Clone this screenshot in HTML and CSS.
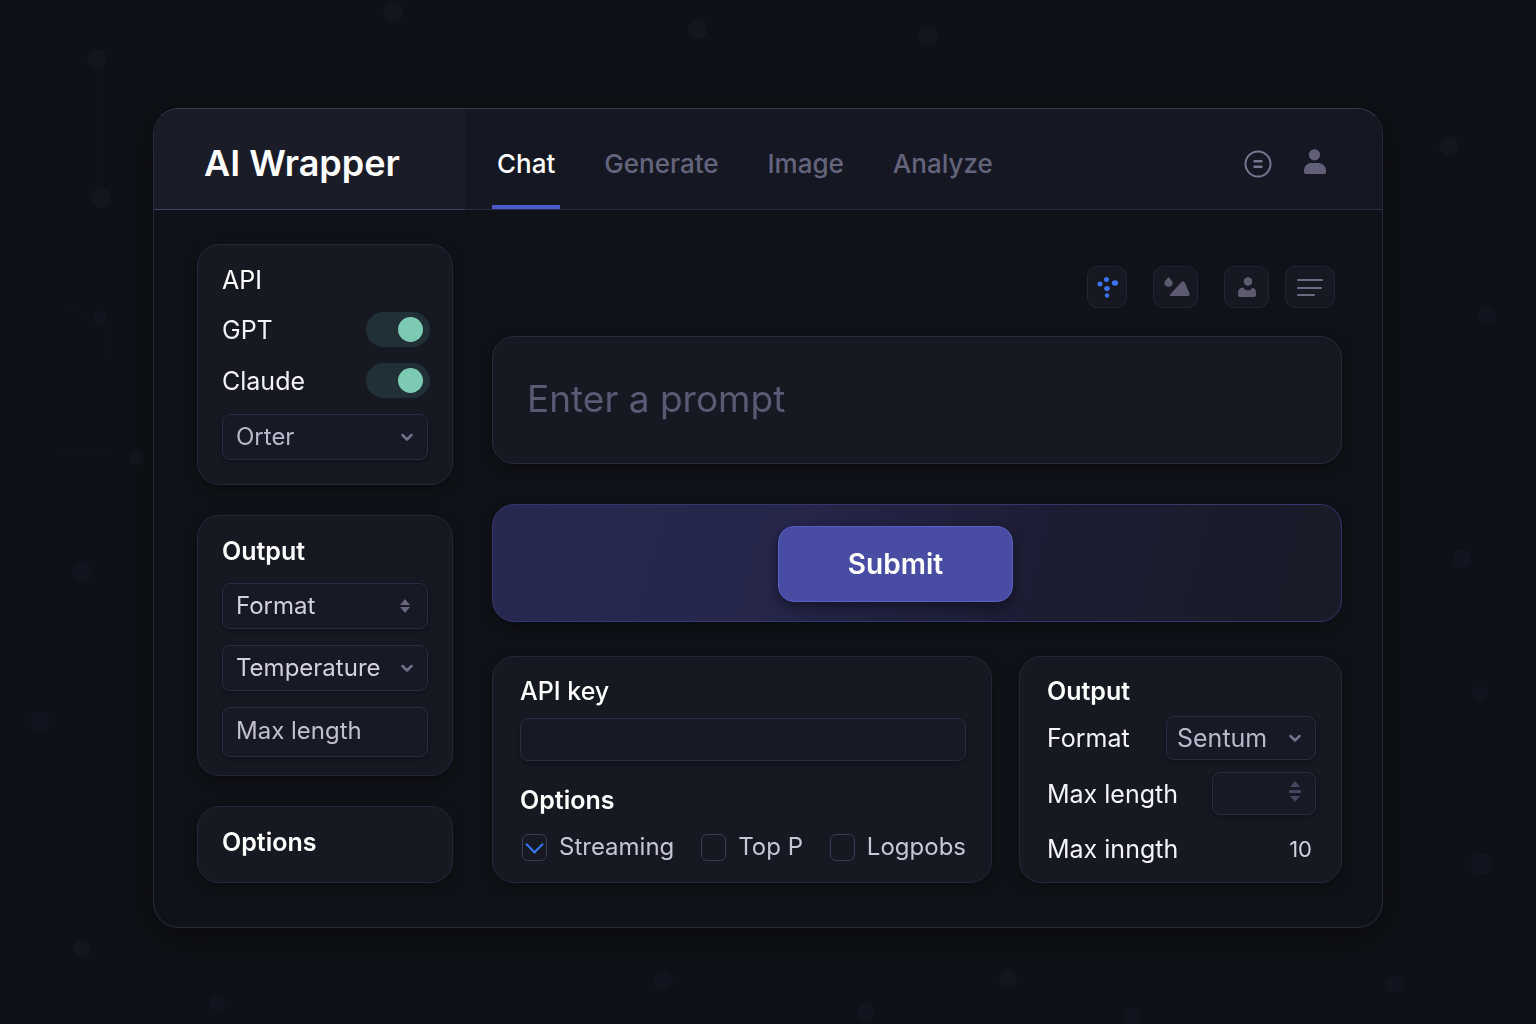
FILE: index.html
```
<!DOCTYPE html>
<html lang="en">
<head>
    <meta charset="UTF-8">
    <meta name="viewport" content="width=device-width, initial-scale=1.0">
    <title>AI Wrapper</title>
    <link rel="stylesheet" href="styles.css">
</head>
<body>
    <svg class="backdrop" viewBox="0 0 1536 1024" preserveAspectRatio="xMidYMid slice" aria-hidden="true">
        <g stroke="#11151f" fill="none">
            <path d="M98 70L101 188M95 205L45 262M104 328L134 448M50 453H128M60 306L90 314"/>
        </g>
        <g fill="#13161f">
            <circle cx="97" cy="59" r="10"/>
            <circle cx="393" cy="12" r="10"/>
            <circle cx="698" cy="29" r="10"/>
            <circle cx="928" cy="36" r="10"/>
            <circle cx="101" cy="198" r="10"/>
            <circle cx="137" cy="457" r="8"/>
            <circle cx="1449" cy="146" r="10"/>
            <circle cx="1008" cy="978" r="9"/>
            <circle cx="82" cy="949" r="9"/>
        </g>
        <g fill="#10151f">
            <circle cx="100" cy="318" r="7"/>
            <circle cx="82" cy="572" r="10"/>
            <circle cx="40" cy="721" r="10"/>
            <circle cx="217" cy="1003" r="8"/>
            <circle cx="663" cy="980" r="10"/>
            <circle cx="866" cy="1012" r="9"/>
            <circle cx="1132" cy="1016" r="8"/>
            <circle cx="1395" cy="984" r="9"/>
            <circle cx="1481" cy="864" r="11"/>
            <circle cx="1480" cy="694" r="8"/>
            <circle cx="1462" cy="559" r="10"/>
            <circle cx="1487" cy="315" r="9"/>
        </g>
    </svg>

    <div class="window">
        <header class="header">
            <h1 class="brand">AI Wrapper</h1>
            <nav class="tabs">
                <a href="#chat" class="tab active">Chat</a>
                <a href="#generate" class="tab">Generate</a>
                <a href="#image" class="tab">Image</a>
                <a href="#analyze" class="tab">Analyze</a>
            </nav>
            <div class="header-actions">
                <button type="button" class="icon-button" aria-label="Messages">
                    <svg width="28" height="28" viewBox="0 0 28 28" fill="none" stroke="#77758f" stroke-width="2">
                        <circle cx="14" cy="14" r="12.5"/>
                        <path d="M10.5 11.3H17.5M10.5 16.7H17.5" stroke-width="2.4" stroke-linecap="round"/>
                    </svg>
                </button>
                <button type="button" class="icon-button" aria-label="Account">
                    <svg width="24" height="32" viewBox="0 0 24 32" fill="#625f78">
                        <circle cx="11.5" cy="6.8" r="5.6"/>
                        <path d="M1 24V22.5C1 17.5 5 15 8.5 15H15C19 15 23 17.5 23 22.5V24Q23 26 21 26H3Q1 26 1 24Z"/>
                    </svg>
                </button>
            </div>
        </header>

        <div class="content">
            <aside class="sidebar">
                <section class="card">
                    <h2 class="heading light">API</h2>
                    <div class="row toggle-row">
                        <label for="gpt">GPT</label>
                        <input type="checkbox" class="toggle" id="gpt" checked>
                    </div>
                    <div class="row toggle-row">
                        <label for="claude">Claude</label>
                        <input type="checkbox" class="toggle" id="claude" checked>
                    </div>
                    <div class="field">
                        <select aria-label="Provider" class="muted"><option>Orter</option></select>
                        <svg class="field-icon" width="14" height="14" viewBox="0 0 14 14"><path class="chevron" d="M2.5 5L7 9.5L11.5 5"/></svg>
                    </div>
                </section>

                <section class="card">
                    <h2 class="heading">Output</h2>
                    <div class="field">
                        <select aria-label="Format"><option>Format</option></select>
                        <svg class="field-icon" width="14" height="14" viewBox="0 0 14 14" fill="#68667e"><path d="M0 6L5 0L10 6ZM0 8H10L5 14Z"/></svg>
                    </div>
                    <div class="field">
                        <select aria-label="Temperature"><option>Temperature</option></select>
                        <svg class="field-icon" width="14" height="14" viewBox="0 0 14 14"><path class="chevron" d="M2.5 5L7 9.5L11.5 5"/></svg>
                    </div>
                    <div class="field">
                        <input type="text" class="tall" aria-label="Max length" placeholder="Max length">
                    </div>
                </section>

                <section class="card">
                    <h2 class="heading">Options</h2>
                </section>
            </aside>

            <main class="main">
                <div class="toolbar">
                    <button type="button" class="tool small" aria-label="Models">
                        <svg width="24" height="24" viewBox="0 0 24 24" fill="#3b73f0">
                            <circle cx="11.5" cy="4.5" r="2.5"/>
                            <circle cx="5" cy="9" r="2.5"/>
                            <ellipse cx="20" cy="8" rx="3.2" ry="2.8"/>
                            <ellipse cx="12" cy="13.5" rx="2.8" ry="2.5"/>
                            <circle cx="12" cy="20.5" r="2.2"/>
                        </svg>
                    </button>
                    <button type="button" class="tool" aria-label="Image">
                        <svg width="28" height="24" viewBox="0 0 28 24" fill="#5d5b70">
                            <path d="M6.5 2L9.5 5.5Q12 8.5 9.5 10.8Q6.5 13 3.5 10.8Q1 8.5 3.5 5.5Z"/>
                            <path d="M8.5 19L19.5 7Q21 5.5 22.5 7L27.5 18.5Q28 21 26 21H9Q7 21 8.5 19Z"/>
                        </svg>
                    </button>
                    <button type="button" class="tool" aria-label="Persona">
                        <svg width="24" height="24" viewBox="0 0 24 24" fill="#5d5b70">
                            <circle cx="13" cy="6.5" r="4.3"/>
                            <path d="M3 18Q3 13 8 12.5Q10 15.5 13 15.5Q16 15.5 17 13Q21 13 21 18V20Q21 22 19 22H5Q3 22 3 20Z"/>
                        </svg>
                    </button>
                    <button type="button" class="tool large" aria-label="Menu">
                        <svg width="28" height="24" viewBox="0 0 28 24" stroke="#6d6b84" stroke-width="2" stroke-linecap="round">
                            <path d="M2 5H26M2 13H25M2 20H18"/>
                        </svg>
                    </button>
                </div>

                <input type="text" class="prompt" aria-label="Prompt" placeholder="Enter a prompt">

                <div class="submit-bar">
                    <button type="submit" class="submit">Submit</button>
                </div>

                <div class="panels">
                    <section class="card panel">
                        <label class="heading medium" for="apiKey">API key</label>
                        <input type="text" class="api-key" id="apiKey">
                        <h2 class="heading">Options</h2>
                        <div class="checks">
                            <label class="check"><input type="checkbox" checked>Streaming</label>
                            <label class="check"><input type="checkbox">Top P</label>
                            <label class="check"><input type="checkbox">Logpobs</label>
                        </div>
                    </section>

                    <section class="card panel">
                        <h2 class="heading">Output</h2>
                        <div class="row format-row">
                            <label for="format">Format</label>
                            <div class="field format-field">
                                <select id="format" class="muted"><option>Sentum</option></select>
                                <svg class="field-icon" width="14" height="14" viewBox="0 0 14 14"><path class="chevron" d="M2.5 5L7 9.5L11.5 5"/></svg>
                            </div>
                        </div>
                        <div class="row">
                            <label for="maxLength">Max length</label>
                            <div class="field length-field">
                                <input type="number" id="maxLength">
                                <svg class="field-icon" width="14" height="26" viewBox="0 0 14 26" fill="#47465e"><path d="M2 6L7 0L12 6ZM2 15H12L7 21Z"/><rect x="1" y="9" width="12" height="3" rx="1"/></svg>
                            </div>
                        </div>
                        <div class="row value-row">
                            <span>Max inngth</span>
                            <span class="value">10</span>
                        </div>
                    </section>
                </div>
            </main>
        </div>
    </div>
</body>
</html>
```
FILE: styles.css
```
* {
    box-sizing: border-box;
}

body {
    margin: 0;
    padding: 108px 153px 96px;
    min-height: 100vh;
    background: #0e1117;
    color: #f3f3f8;
    font-family: Inter, "Liberation Sans", sans-serif;
    font-size: 25px;
    line-height: 32px;
}

/* Faint dots behind the window */
.backdrop {
    position: fixed;
    top: 0;
    left: 0;
    width: 100%;
    height: 100%;
    z-index: -1;
}

button, input, select {
    font: inherit;
    color: inherit;
}

button {
    cursor: pointer;
}

.window {
    border: 1px solid #27293d;
    border-top-color: #3a3b52;
    border-radius: 26px;
    background: #0f1218;
    box-shadow: 0 8px 36px rgba(0, 0, 0, 0.4);
    overflow: hidden;
}

/* Header */
.header {
    display: flex;
    height: 101px;
    background: #151822;
    border-bottom: 1px solid #2b2c42;
}

.brand {
    width: 311px;
    height: 101px;
    margin: 0;
    padding-left: 50px;
    background: #1a1c28;
    border-bottom: 1px solid #41425c;
    color: #fff;
    font-size: 36px;
    font-weight: 600;
    line-height: 109px;
}

.tabs {
    display: flex;
    gap: 39px;
    padding-left: 27px;
}

.tab {
    height: 100px;
    padding: 0 5px;
    border-bottom: 4px solid transparent;
    color: #65647d;
    font-size: 26px;
    font-weight: 500;
    line-height: 110px;
    text-decoration: none;
}

.tab.active {
    border-bottom-color: #4b5ac8;
    color: #fff;
}

.header-actions {
    display: flex;
    align-items: center;
    gap: 31px;
    margin-left: auto;
    padding: 10px 55px 0 0;
}

.icon-button {
    display: flex;
    padding: 0;
    border: none;
    background: none;
}

/* Page body */
.content {
    display: grid;
    grid-template-columns: 256px 1fr;
    gap: 39px;
    padding: 34px 40px 44px 43px;
}

.sidebar {
    display: flex;
    flex-direction: column;
    gap: 30px;
}

.card {
    display: flex;
    flex-direction: column;
    gap: 16px;
    padding: 19px 24px 24px;
    border: 1px solid #25273c;
    border-radius: 22px;
    background: #161822;
    box-shadow: 0 4px 14px rgba(0, 0, 0, 0.35);
}

.sidebar .card:nth-child(2) {
    padding-bottom: 18px;
}

.heading {
    margin: 0;
    color: #fff;
    font-size: 25px;
    font-weight: 600;
}

.heading.medium {
    font-weight: 500;
}

.heading.light {
    font-weight: 400;
}

.row {
    display: flex;
    align-items: center;
    justify-content: space-between;
}

.toggle-row {
    margin-right: -2px;
}

.toggle {
    appearance: none;
    display: flex;
    align-items: center;
    justify-content: flex-end;
    width: 64px;
    height: 35px;
    margin: 0;
    padding-right: 7px;
    border-radius: 18px;
    background: #212f36;
}

.toggle::before {
    content: "";
    width: 25px;
    height: 25px;
    border-radius: 50%;
    background: #7dcab4;
}

.toggle:not(:checked) {
    justify-content: flex-start;
    padding-left: 7px;
}

/* Boxed fields */
.field {
    position: relative;
}

.field select,
.field input,
.api-key {
    appearance: none;
    display: block;
    width: 100%;
    height: 46px;
    padding: 0 13px;
    border: 1px solid #2a2c43;
    border-radius: 8px;
    background: #171924;
    color: #d2d2df;
    font-size: 24px;
    box-shadow: 0 2px 4px rgba(0, 0, 0, 0.25);
}

.field select.muted {
    color: #b9b9cc;
}

.field input.tall {
    height: 50px;
    padding-bottom: 4px;
}

.field input::placeholder {
    color: #c0c0d0;
    opacity: 1;
}

.field-icon {
    position: absolute;
    top: 50%;
    right: 14px;
    transform: translateY(-50%);
    pointer-events: none;
}

.chevron {
    fill: none;
    stroke: #74728b;
    stroke-width: 2.5;
    stroke-linecap: round;
    stroke-linejoin: round;
}

/* Main column */
.toolbar {
    display: flex;
    justify-content: flex-end;
    gap: 16px;
    padding: 22px 7px 28px 0;
}

.tool {
    display: flex;
    align-items: center;
    justify-content: center;
    width: 45px;
    height: 42px;
    padding: 0;
    border: 1px solid #222438;
    border-radius: 10px;
    background: #161822;
}

.tool.small {
    width: 40px;
}

.tool.large {
    width: 50px;
}

.tool:nth-child(1),
.tool:nth-child(2) {
    margin-right: 10px;
}

.prompt {
    display: block;
    width: 100%;
    height: 128px;
    padding: 0 34px 4px;
    border: 1px solid #282a40;
    border-radius: 22px;
    background: #161822;
    font-size: 37px;
    box-shadow: 0 4px 14px rgba(0, 0, 0, 0.35);
}

.prompt::placeholder {
    color: #5a5a75;
    opacity: 1;
}

.submit-bar {
    display: flex;
    justify-content: center;
    margin: 40px 0 34px;
    padding: 21px 43px 19px 0;
    border: 1px solid #34376b;
    border-radius: 22px;
    background: linear-gradient(105deg, #282951 0%, #25264a 35%, #1c1d33 65%, #191b27 100%);
    box-shadow: 0 4px 14px rgba(0, 0, 0, 0.35);
}

.submit {
    width: 235px;
    height: 76px;
    border: 1px solid #595fc4;
    border-radius: 16px;
    background: #484da3;
    color: #fff;
    font-size: 28px;
    font-weight: 600;
    box-shadow: 0 5px 14px rgba(0, 0, 0, 0.45);
}

.panels {
    display: grid;
    grid-template-columns: 1fr 323px;
    gap: 27px;
}

.panel {
    gap: 0;
    padding: 18px 25px 17px 27px;
}

.api-key {
    height: 43px;
    margin: 11px 0 23px;
}

.checks {
    display: flex;
    justify-content: space-between;
    margin-top: 15px;
    padding-left: 2px;
    color: #c6c6d5;
    font-size: 24px;
}

.check {
    display: flex;
    align-items: center;
    gap: 12px;
}

.check input {
    appearance: none;
    display: flex;
    align-items: center;
    justify-content: center;
    width: 25px;
    height: 27px;
    margin: 0;
    border: 1px solid #3a3b55;
    border-radius: 6px;
    background: #161822;
}

.check input:checked::before {
    content: "";
    width: 11px;
    height: 11px;
    margin-top: -6px;
    border: solid #3478f6;
    border-width: 0 2px 2px 0;
    transform: rotate(45deg);
}

.format-row {
    margin: 9px 0 12px;
}

.format-field {
    width: 150px;
}

.format-field select {
    height: 44px;
    padding: 0 10px;
    font-size: 25px;
}

.length-field {
    width: 104px;
}

.length-field input {
    height: 43px;
}

.length-field input::-webkit-inner-spin-button {
    appearance: none;
}

.value-row {
    margin-top: 18px;
}

.value {
    padding-right: 4px;
    color: #d2d2df;
    font-size: 22px;
}
```
